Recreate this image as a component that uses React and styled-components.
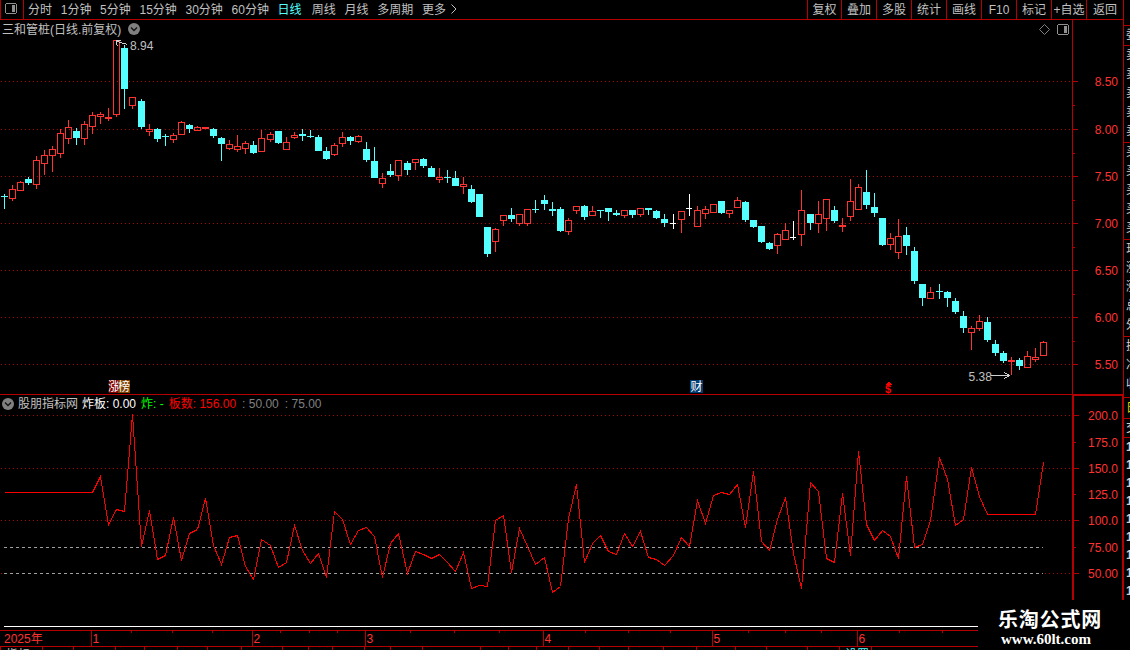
import React from "react";
import styled, { createGlobalStyle } from "styled-components";

const Global = createGlobalStyle`
  html, body {
    margin: 0;
    background: #000;
    overflow: hidden;
  }
`;

const FONT = '"Liberation Sans", "Noto Sans CJK SC", sans-serif';
const RED = "#b40000";
const UP = "#ff3232";
const DOWN = "#54ffff";

const Screen = styled.div`
  position: relative;
  display: flex;
  width: 1130px;
  height: 650px;
  overflow: hidden;
  background: #000;
  color: #c0c0c0;
  font-family: ${FONT};
  font-size: 12px;
  line-height: 18px;
  white-space: nowrap;
`;

const Main = styled.div`
  display: flex;
  flex-direction: column;
  width: 1123px;
  flex: none;
`;

const Toolbar = styled.div`
  display: flex;
  height: 19px;
  flex: none;
  line-height: 20px;
  border-bottom: 1px solid ${RED};
`;

const PanelToggle = styled.div`
  display: flex;
  box-sizing: border-box;
  width: 24px;
  padding: 3px 0 0 4px;
  border: solid ${RED};
  border-width: 0 1px;
`;

const Periods = styled.div`
  display: flex;
  flex: 1;
  gap: 8.7px;
  padding-left: 4px;
`;

const Period = styled.span`
  color: ${(p) => (p.$active ? DOWN : "inherit")};
  padding-right: ${(p) => (p.$active ? 1.5 : 0)}px;
`;

const Tools = styled.div`
  display: grid;
  grid-template-columns: 34px repeat(7, 35px) 37px;
`;

const Tool = styled.span`
  border-left: 1px solid ${RED};
  text-align: center;
`;

const Panel = styled.div`
  display: grid;
  grid-template-columns: 1072px 51px;
  height: ${(p) => p.$height}px;
  flex: none;
`;

const Plot = styled.div`
  display: flex;
  flex-direction: column;
  border-top: ${(p) => (p.$ruled ? `1px solid ${RED}` : "0")};
`;

const PlotHead = styled.div`
  display: flex;
  align-items: center;
  height: 18px;
  flex: none;
  padding-left: 2px;
  line-height: ${(p) => p.$line || 18}px;
`;

const HeadTools = styled.div`
  display: flex;
  align-items: center;
  gap: 7px;
  margin-left: auto;
  padding-right: 3px;
`;

const Title = styled.span`
  padding-top: 2px;
`;

const Readout = styled.span`
  color: ${(p) => p.$color};
  margin-left: ${(p) => p.$gap}px;
`;

const Axis = styled.div`
  box-sizing: border-box;
  border-left: ${(p) => (p.$heavy ? 2 : 1)}px solid ${RED};
  border-top: ${(p) => (p.$heavy ? `2px solid ${RED}` : "0")};
  border-right: ${(p) => (p.$heavy ? `1px solid ${RED}` : "0")};
`;

const Drawing = styled.svg`
  display: block;
  flex: none;
  overflow: visible;
  font-family: ${FONT};
  font-size: 12px;
`;

const TimeAxis = styled.div`
  height: 15px;
  flex: none;
  border: solid ${RED};
  border-width: 1px 0;
`;

const BottomTabs = styled.div`
  display: flex;
  height: 3px;
  overflow: hidden;
`;

const BottomTab = styled.span`
  box-sizing: border-box;
  width: ${(p) => p.$width}px;
  flex: none;
  border-left: 1px solid ${RED};
  padding-left: 5px;
  line-height: 17px;
  color: ${(p) => p.$color || "#c0c0c0"};
`;

const Quote = styled.div`
  box-sizing: border-box;
  width: 7px;
  flex: none;
  border-left: 1px solid ${RED};
  overflow: hidden;
`;

const QuoteGroup = styled.div`
  display: flex;
  flex-direction: column;
  box-sizing: border-box;
  height: ${(p) => p.$height}px;
  border-bottom: ${(p) => (p.$open ? "0" : `1px solid ${RED}`)};
  padding-left: 2px;
  overflow: hidden;
  color: ${(p) => p.$color || "#d0d0d0"};
`;

const QuoteRow = styled.span`
  flex: none;
  height: ${(p) => p.$step}px;
  line-height: ${(p) => p.$step}px;
  font-weight: ${(p) => (p.$bold ? 700 : 400)};
`;

const SiteMark = styled.div`
  position: absolute;
  left: 978px;
  top: 600px;
  width: 152px;
  height: 50px;
  box-sizing: border-box;
  padding: 8px 0 0 20px;
  background: #000;
  color: #fff;
`;

const SiteName = styled.div`
  font: 700 20px/22px "Noto Sans CJK SC", sans-serif;
  letter-spacing: 0.8px;
`;

const SiteUrl = styled.div`
  padding-left: 3px;
  font: 700 15px/19px "Liberation Serif", serif;
`;

const periods = ["分时", "1分钟", "5分钟", "15分钟", "30分钟", "60分钟", "日线", "周线", "月线", "多周期", "更多"];
const tools = ["复权", "叠加", "多股", "统计", "画线", "F10", "标记", "+自选", "返回"];

// x, wick top, body top, body bottom, wick bottom, kind (d = down, w = flat)
const candles = [
  [4, 194, 196, 197, 209, "d"], [12, 185, 189, 199, 201], [20, 181, 182, 191, 191],
  [28, 177, 179, 183, 185, "d"], [36, 156, 160, 185, 189], [44, 150, 155, 164, 175],
  [52, 146, 149, 156, 172], [60, 129, 133, 154, 158], [68, 120, 127, 139, 144],
  [76, 128, 131, 138, 145, "d"], [84, 121, 124, 139, 145], [92, 112, 115, 127, 134],
  [100, 112, 114, 117, 124], [108, 108, 117, 119, 121], [116, 40, 40, 115, 117],
  [124, 45, 48, 89, 109, "d"], [132, 97, 97, 106, 109], [141, 99, 101, 127, 129, "d"],
  [149, 124, 129, 132, 136], [157, 128, 129, 139, 142, "d"], [165, 134, 136, 137, 146, "d"],
  [173, 133, 135, 140, 143], [181, 121, 122, 135, 135], [189, 124, 125, 129, 133, "d"],
  [197, 126, 127, 131, 131], [205, 127, 127, 129, 129], [213, 128, 129, 136, 138, "d"],
  [221, 137, 138, 144, 161, "d"], [229, 140, 144, 149, 150], [237, 135, 146, 150, 152],
  [245, 141, 143, 149, 154], [253, 141, 145, 153, 154, "d"], [261, 130, 138, 152, 152],
  [270, 132, 134, 140, 142], [278, 131, 131, 143, 144, "d"], [286, 137, 142, 150, 150],
  [294, 132, 135, 138, 139], [302, 129, 134, 136, 141, "d"], [310, 130, 136, 137, 138, "d"],
  [318, 135, 137, 151, 151, "d"], [326, 147, 151, 159, 160, "d"], [334, 143, 145, 155, 156],
  [342, 132, 137, 144, 147], [350, 136, 137, 141, 145, "d"], [358, 135, 136, 142, 143],
  [366, 142, 149, 160, 162, "d"], [374, 147, 161, 178, 178, "d"], [382, 173, 178, 184, 188],
  [390, 164, 171, 175, 177, "d"], [398, 160, 160, 176, 181], [407, 161, 163, 170, 175, "d"],
  [415, 159, 159, 163, 170], [423, 158, 159, 166, 168, "d"], [431, 166, 168, 177, 177, "d"],
  [439, 168, 177, 180, 183], [447, 170, 177, 178, 183, "d"], [455, 171, 178, 186, 186, "d"],
  [463, 177, 184, 187, 194], [471, 185, 189, 202, 203, "d"], [479, 194, 194, 217, 217, "d"],
  [487, 227, 227, 254, 257, "d"], [495, 228, 229, 242, 252], [503, 215, 215, 221, 226],
  [511, 208, 215, 219, 222, "d"], [519, 214, 214, 224, 226], [527, 209, 209, 224, 226],
  [535, 200, 209, 210, 213, "d"], [544, 195, 200, 204, 210, "d"], [552, 202, 209, 211, 216, "d"],
  [560, 207, 209, 231, 232, "d"], [568, 218, 220, 232, 235], [576, 206, 206, 211, 214],
  [584, 205, 206, 217, 220, "d"], [592, 206, 211, 216, 216], [600, 210, 210, 211, 218, "d"],
  [608, 208, 208, 212, 221, "d"], [616, 210, 213, 215, 216, "d"], [624, 210, 210, 216, 218],
  [632, 210, 210, 215, 218, "d"], [640, 208, 208, 215, 217], [648, 208, 208, 210, 215, "d"],
  [656, 210, 211, 218, 219, "d"], [664, 214, 219, 223, 227, "d"], [673, 214, 223, 224, 229, "w"],
  [681, 211, 211, 220, 233], [689, 194, 208, 209, 216, "w"], [697, 206, 210, 227, 227],
  [705, 206, 209, 214, 219], [713, 204, 204, 213, 213], [721, 201, 201, 213, 214, "d"],
  [729, 210, 210, 214, 218], [737, 197, 200, 208, 208], [745, 201, 202, 220, 222, "d"],
  [753, 220, 220, 227, 228, "d"], [761, 226, 226, 242, 243, "d"], [769, 242, 243, 249, 250, "d"],
  [777, 233, 234, 246, 254], [785, 223, 230, 240, 240], [793, 221, 237, 238, 240, "w"],
  [801, 190, 210, 235, 246], [810, 214, 214, 223, 230, "d"], [818, 201, 214, 224, 233],
  [826, 199, 199, 219, 231], [834, 206, 210, 221, 223, "d"], [842, 218, 225, 227, 232],
  [850, 179, 201, 217, 221], [858, 184, 187, 210, 210], [866, 170, 192, 205, 209, "d"],
  [874, 193, 207, 213, 217, "d"], [882, 218, 218, 245, 246, "d"], [890, 233, 238, 245, 250],
  [898, 219, 236, 253, 259], [906, 227, 235, 246, 255, "d"], [914, 247, 251, 281, 284, "d"],
  [922, 284, 284, 298, 306, "d"], [930, 287, 292, 299, 299], [939, 284, 291, 292, 299, "d"],
  [947, 291, 292, 298, 307, "d"], [955, 298, 301, 312, 314, "d"], [963, 311, 316, 328, 333, "d"],
  [971, 326, 328, 333, 350], [979, 315, 321, 329, 331], [987, 317, 322, 340, 342, "d"],
  [995, 340, 344, 353, 356, "d"], [1003, 351, 353, 361, 363, "d"], [1011, 357, 360, 362, 375],
  [1019, 358, 360, 366, 370, "d"], [1027, 351, 356, 368, 368], [1035, 348, 357, 360, 362],
  [1043, 341, 342, 356, 356],
];

// one value per candle
const boardLine = [
  492, 492, 492, 492, 492, 492, 492, 492, 492, 492, 492, 492, 476, 524, 509, 511, 414, 546,
  510, 559, 555, 517, 560, 533, 529, 498, 545, 564, 537, 535, 566, 579, 539, 545, 567, 562,
  525, 550, 563, 553, 577, 511, 519, 544, 530, 527, 536, 577, 543, 533, 573, 551, 554, 558,
  554, 562, 571, 552, 588, 585, 586, 520, 515, 572, 528, 546, 564, 557, 592, 586, 518, 484,
  562, 543, 535, 551, 554, 533, 546, 531, 557, 559, 565, 555, 537, 546, 500, 523, 495, 492,
  494, 484, 527, 471, 541, 550, 519, 497, 553, 588, 482, 491, 558, 562, 493, 555, 451, 524,
  540, 530, 536, 558, 476, 547, 544, 520, 457, 479, 525, 519, 467, 496, 514, 514, 514, 514,
  514, 514, 514, 462,
];

const priceTicks = [[81, "8.50"], [129, "8.00"], [176, "7.50"], [223, "7.00"], [270, "6.50"], [317, "6.00"], [364, "5.50"]];
const countTicks = [[415, "200.0"], [442, "175.0"], [468, "150.0"], [494, "125.0"], [520, "100.0"], [547, "75.00"], [573, "50.00"]];
const months = [[91, "1"], [252, "2"], [365, "3"], [543, "4"], [712, "5"], [857, "6"]];
const weekTicks = [131, 172, 212, 280, 309, 337, 410, 454, 499, 585, 628, 670, 748, 785, 821, 899, 942];
const tabEdges = [0, 42, 73, 115, 144, 177, 207, 241, 282, 308, 332, 364, 390, 422, 480, 508, 536, 568, 599, 628, 663, 696, 735, 766, 807, 839, 871, 978];
const tabText = { 0: ["指标"], 25: ["设置", DOWN] };

const SidePanelIcon = () => (
  <svg width="12" height="11" viewBox="0 0 12 11" shapeRendering="crispEdges">
    <path d="M1 .5h10M1 10.5h10M.5 1v9M11.5 1v9" stroke="#909090" fill="none" />
    <rect x="7" y="2" width="3" height="7" fill="#909090" />
  </svg>
);

const DropIcon = ({ gap }) => (
  <svg width="12" height="12" viewBox="0 0 12 12" style={{ marginLeft: gap }}>
    <circle cx="6" cy="6" r="6" fill="#808080" />
    <path d="M3 4.5 6 7.5 9 4.5" stroke="#111" strokeWidth="1.3" fill="none" />
  </svg>
);

const Grid = ({ ys }) =>
  ys.map((y) => (
    <line key={y} x1="1" x2="1072" y1={y + 0.5} y2={y + 0.5} stroke="#b00000" strokeDasharray="1 3" />
  ));

const Candle = ({ data: [x, high, top, bottom, low, kind] }) => {
  const color = kind === "d" ? DOWN : kind === "w" ? "#fff" : UP;
  const solid = kind || bottom - top <= 2;
  return (
    <g fill={color}>
      <rect x={x} y={high} width="1" height={top - high} />
      <rect x={x} y={bottom} width="1" height={low - bottom} />
      {solid ? (
        <rect x={x - 3} y={top} width={kind === "w" ? 6 : 7} height={bottom - top} />
      ) : (
        <rect x={x - 2.5} y={top + 0.5} width="6" height={bottom - top - 1} fill="none" stroke={color} />
      )}
    </g>
  );
};

const PriceChart = () => (
  <Drawing width="1072" height="356" viewBox="0 38 1072 356" shapeRendering="crispEdges">
    <Grid ys={priceTicks.map((t) => t[0])} />
    {candles.map((c) => (
      <Candle key={c[0]} data={c} />
    ))}
    <g stroke="#d0d0d0" fill="none">
      <path d="M127.5 44.5 117 41.5M120.5 40.5h-4v4l2 2" />
      <path d="M991 375.5h18M1004.5 372.5l5 3-5 3" />
    </g>
    <text x="130" y="50" fill="#c0c0c0">8.94</text>
    <text x="968.5" y="381" fill="#c0c0c0">5.38</text>
    <rect x="109" y="380" width="10" height="13" fill="#800000" />
    <text x="108" y="391" fill="#fff">涨</text>
    <rect x="118" y="380" width="12" height="13" fill="#804000" />
    <text x="118" y="391" fill="#fff">榜</text>
    <rect x="690" y="380" width="13" height="13" fill="#003c70" />
    <text x="690.5" y="391" fill="#fff">财</text>
    <path d="M885 385h7l-3.5-3.5z" fill="#f00" />
    <text x="885" y="393" fill="#f00" fontSize="11" fontWeight="700">$</text>
  </Drawing>
);

const CountChart = () => (
  <Drawing width="1072" height="217" viewBox="0 413 1072 217" shapeRendering="crispEdges">
    <Grid ys={[415, 468, 520, 573]} />
    <rect x="4" y="573" width="1039" height="1" fill="#000" />
    <path d="M4 547.5H1043M4 573.5H1043" stroke="#a0a0a0" strokeDasharray="3 3" />
    <polyline
      points={boardLine.map((y, i) => `${candles[i][0] + 0.5},${y + 0.5}`).join(" ")}
      fill="none"
      stroke="#f00"
    />
    <rect x="4" y="626" width="974" height="1" fill="#fff" />
  </Drawing>
);

const Scale = ({ ticks, minor, top, left, right }) => (
  <Drawing width="48" height="200" viewBox={`${left} ${top} 48 200`}>
    {ticks.map(([y, label]) => (
      <React.Fragment key={y}>
        <rect x={left} y={y} width={minor.includes(y) ? 1 : 5} height="1" fill={RED} />
        <text x={right} y={y + 5} textAnchor="end" fill={UP}>{label}</text>
      </React.Fragment>
    ))}
    {minor.map((y) => (
      <rect key={y} x={left} y={y} width="2" height="1" fill={RED} />
    ))}
  </Drawing>
);

const App = () => (
  <>
    <Global />
    <Screen>
      <Main>
        <Toolbar>
          <PanelToggle>
            <SidePanelIcon />
          </PanelToggle>
          <Periods>
            {periods.map((name) => (
              <Period key={name} $active={name === "日线"}>{name}</Period>
            ))}
            <svg width="6" height="10" viewBox="0 0 6 10" style={{ margin: "4px 0 0 -4px" }}>
              <path d="M.5.5 5 5 .5 9.5" stroke="#c0c0c0" fill="none" />
            </svg>
          </Periods>
          <Tools>
            {tools.map((name) => (
              <Tool key={name}>{name}</Tool>
            ))}
          </Tools>
        </Toolbar>

        <Panel $height={374}>
          <Plot>
            <PlotHead>
              <Title>三和管桩(日线.前复权)</Title>
              <DropIcon gap={7} />
              <HeadTools>
                <svg width="11" height="11" viewBox="0 0 11 11">
                  <path d="M5.5.5 10.5 5.5 5.5 10.5.5 5.5z" stroke="#808080" fill="none" />
                </svg>
                <SidePanelIcon />
              </HeadTools>
            </PlotHead>
            <PriceChart />
          </Plot>
          <Axis>
            <Scale ticks={priceTicks} minor={[105, 153, 200, 247, 294, 341]} top={20} left={1073} right={1118} />
          </Axis>
        </Panel>

        <Panel $height={236}>
          <Plot $ruled>
            <PlotHead $line={16}>
              <DropIcon />
              <Readout $color="#c0c0c0" $gap={4}>股朋指标网</Readout>
              <Readout $color="#fff" $gap={4}>炸板: 0.00</Readout>
              <Readout $color="#0f0" $gap={5}>炸: -</Readout>
              <Readout $color="#f00" $gap={5}>板数: 156.00</Readout>
              <Readout $color="#808080" $gap={6}>: 50.00</Readout>
              <Readout $color="#808080" $gap={6}>: 75.00</Readout>
            </PlotHead>
            <CountChart />
          </Plot>
          <Axis $heavy>
            <Scale ticks={countTicks} minor={[442, 494, 547]} top={396} left={1074} right={1118} />
          </Axis>
        </Panel>

        <TimeAxis>
          <Drawing width="978" height="15" viewBox="0 631 978 15">
            <text x="4" y="643" fill={UP}>2025年</text>
            {months.map(([x, label]) => (
              <React.Fragment key={x}>
                <rect x={x} y="631" width="1" height="15" fill={RED} />
                <text x={x + 1.5} y="643" fill={UP}>{label}</text>
              </React.Fragment>
            ))}
            {weekTicks.map((x) => (
              <rect key={x} x={x} y="631" width="1" height="2" fill={RED} />
            ))}
          </Drawing>
        </TimeAxis>
        <BottomTabs>
          {tabEdges.slice(0, -1).map((x, i) => (
            <BottomTab key={x} $width={tabEdges[i + 1] - x} $color={tabText[i]?.[1]}>
              {tabText[i]?.[0]}
            </BottomTab>
          ))}
        </BottomTabs>
      </Main>

      <Quote>
        <QuoteGroup $height={26} />
        <QuoteGroup $height={20}>
          <QuoteRow $step={19}>委</QuoteRow>
        </QuoteGroup>
        {["卖", "买"].map((side) => (
          <QuoteGroup key={side} $height={97}>
            {[0, 1, 2, 3, 4].map((n) => (
              <QuoteRow key={n} $step={19}>{side}</QuoteRow>
            ))}
          </QuoteGroup>
        ))}
        <QuoteGroup $height={97}>
          {[..."现涨涨总外"].map((c, i) => (
            <QuoteRow key={i} $step={19}>{c}</QuoteRow>
          ))}
        </QuoteGroup>
        <QuoteGroup $height={61}>
          {[..."换净收"].map((c) => (
            <QuoteRow key={c} $step={19}>{c}</QuoteRow>
          ))}
        </QuoteGroup>
        <QuoteGroup $height={21} $color="#d8d800">
          <QuoteRow $step={20}>日</QuoteRow>
        </QuoteGroup>
        <QuoteGroup $height={19}>
          <QuoteRow $step={18}>交</QuoteRow>
        </QuoteGroup>
        <QuoteGroup $height={212} $open>
          {Array.from({ length: 9 }, (_, i) => (
            <QuoteRow key={i} $step={18} $bold>1</QuoteRow>
          ))}
        </QuoteGroup>
      </Quote>

      <SiteMark>
        <SiteName>乐淘公式网</SiteName>
        <SiteUrl>www.60lt.com</SiteUrl>
      </SiteMark>
    </Screen>
  </>
);

export default App;
